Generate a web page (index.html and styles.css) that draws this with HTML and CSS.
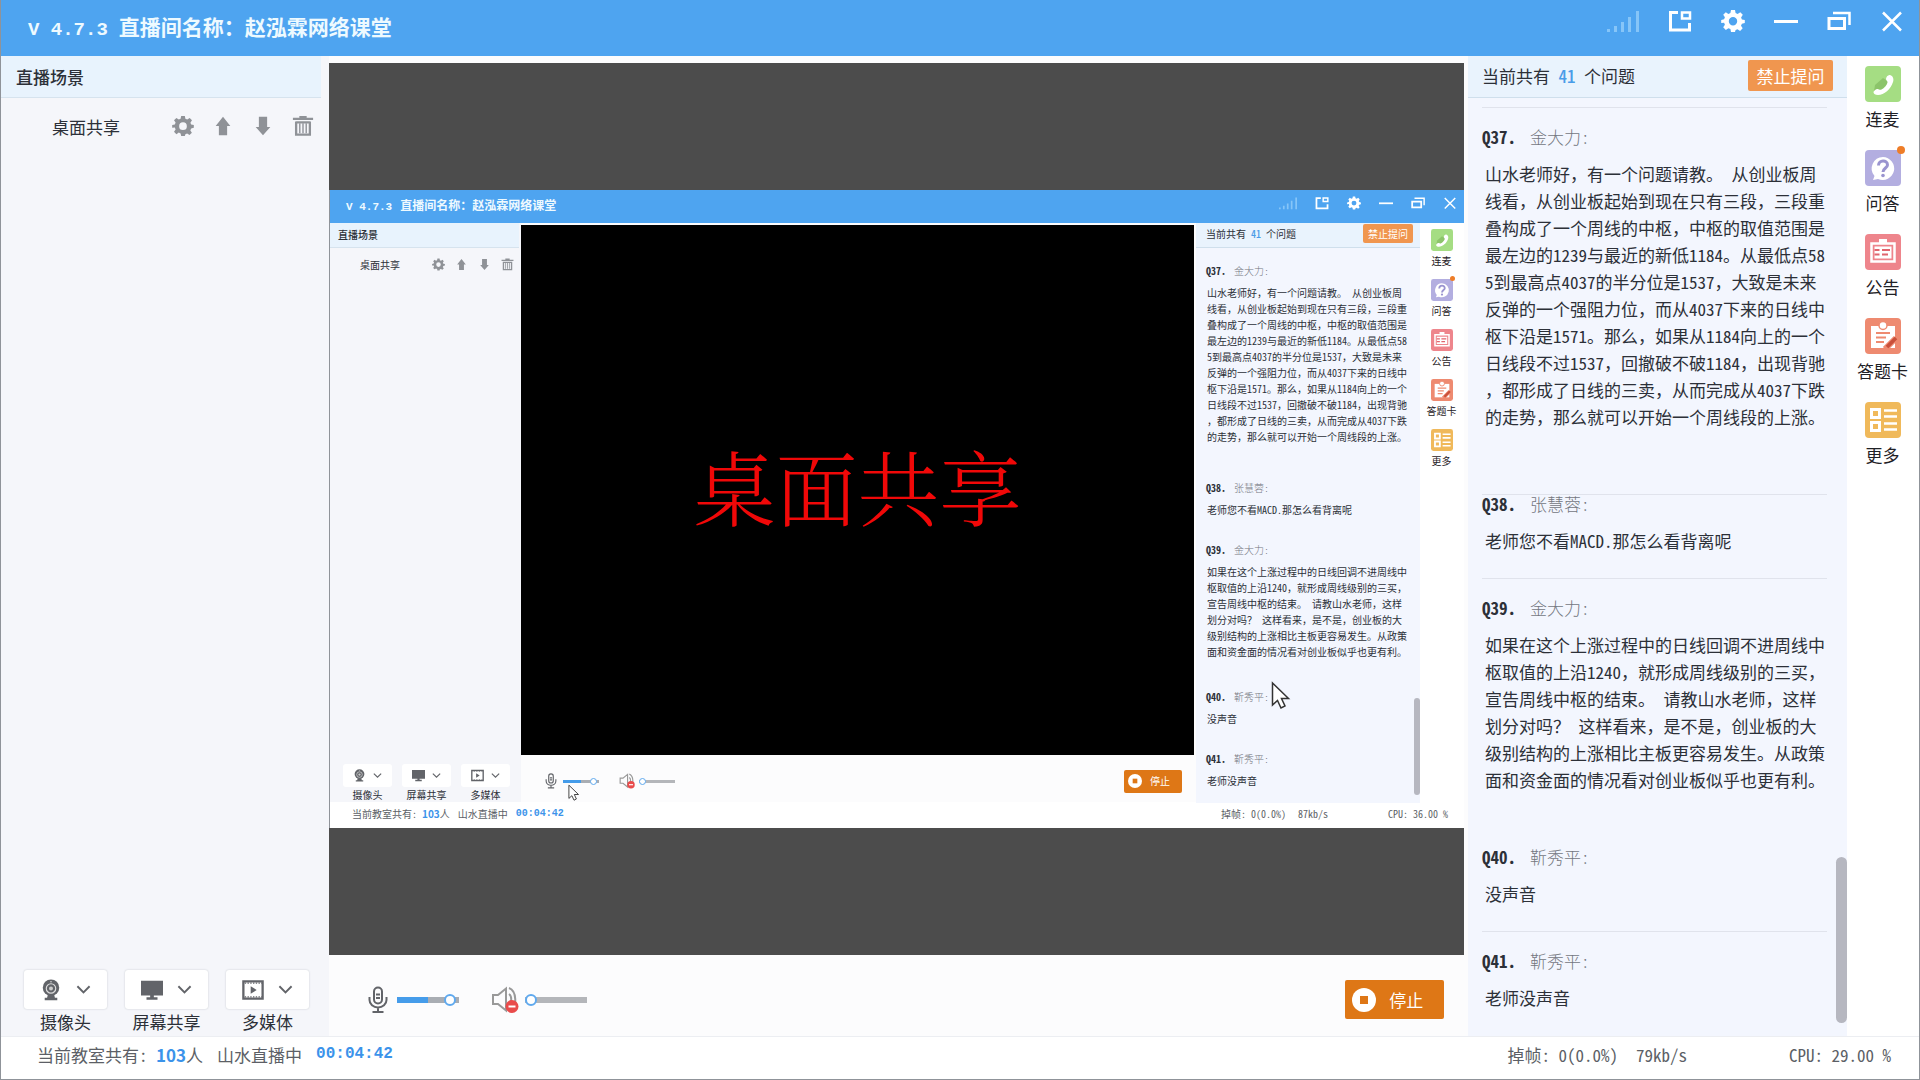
FILE: index.html
```html
<!DOCTYPE html>
<html lang="zh-CN">
<head>
<meta charset="utf-8">
<title>赵泓霖网络课堂</title>
<link rel="stylesheet" href="styles.css">
</head>
<body>
<svg class="sprite" aria-hidden="true">
  <symbol id="i-signal" viewBox="0 0 32 24"><path fill="currentColor" d="M0 20h3v3H0zM7 17h3v6H7zM14 13h3v10h-3zM21 8h3v15h-3zM29 2h3v21h-3z"/></symbol>
  <symbol id="i-popout" viewBox="0 0 24 24"><path fill="none" stroke="currentColor" stroke-width="3" d="M10 3.500H2.500v17.500h19V14"/><path fill="none" stroke="currentColor" stroke-width="2.500" d="M14 3.500h8v6h-8z"/></symbol>
  <symbol id="i-gear" viewBox="0 0 24 24"><path fill="currentColor" fill-rule="evenodd" d="M10 1h4l.6 3 2 .9L19.300 3.200l2.500 2.600-1.700 2.600.8 2 2.900.6v3l-2.900.8-.9 2 1.700 2.500-2.600 2.600-2.600-1.700-1.900.8L14 23h-4l-.6-2.900-2-.9-2.600 1.700-2.600-2.600 1.700-2.600-.8-2L.200 14v-3l2.900-.7.8-2L2.200 5.800l2.600-2.600 2.600 1.700 2-.9zM12 8a4.200 4.200 0 1 0 0 8.400A4.200 4.200 0 0 0 12 8z"/></symbol>
  <symbol id="i-min" viewBox="0 0 24 24"><path fill="currentColor" d="M0 11h24v3H0z"/></symbol>
  <symbol id="i-restore" viewBox="0 0 24 24"><path fill="none" stroke="currentColor" stroke-width="3" d="M2 9.500h15.500v10H2z"/><path fill="none" stroke="currentColor" stroke-width="2.500" d="M6 4h16.500v12"/></symbol>
  <symbol id="i-close" viewBox="0 0 24 24"><path stroke="currentColor" stroke-width="2.500" d="M3 3.500l18 18M21 3.500l-18 18"/></symbol>
  <symbol id="i-up" viewBox="0 0 24 24"><path fill="currentColor" d="M12 2l8 10h-3.500v10h-9V12H4z"/></symbol>
  <symbol id="i-down" viewBox="0 0 24 24"><path fill="currentColor" d="M12 22l8-9h-3.500V2h-9v11H4z"/></symbol>
  <symbol id="i-trash" viewBox="0 0 24 24"><path fill="currentColor" d="M8 1h8v2h7v2.500H1V3h7z"/><path fill="none" stroke="currentColor" stroke-width="2.500" d="M4.500 7v14.500h15V7M4.500 8h15"/><path stroke="currentColor" stroke-width="1.500" d="M8.500 9v11M12 9v11M15.500 9v11"/></symbol>
  <symbol id="i-webcam" viewBox="0 0 24 28"><circle cx="12" cy="11" r="10.500" fill="currentColor"/><circle cx="12" cy="12" r="6" fill="none" stroke="#ddd" stroke-width="1.500"/><circle cx="12" cy="12" r="2.500" fill="#ccc"/><circle cx="12" cy="3.500" r="1" fill="#ddd"/><path fill="currentColor" d="M8 20h8l1 4h3v3H4v-3h3z"/></symbol>
  <symbol id="i-monitor" viewBox="0 0 24 24"><path fill="currentColor" d="M0 2h24v16H0zM10 18h4v2h4v2.500H6V20h4z"/></symbol>
  <symbol id="i-media" viewBox="0 0 24 24"><path fill="none" stroke="currentColor" stroke-width="2.500" d="M1.500 2.500h21v19h-21z"/><path stroke="currentColor" stroke-width="1.500" stroke-dasharray="1.500 1.500" d="M3 4.500h19M3 19.500h19"/><path fill="currentColor" d="M9.500 8l6.500 4-6.500 4z"/></symbol>
  <symbol id="i-chevron" viewBox="0 0 16 16"><path fill="none" stroke="currentColor" stroke-width="2" d="M1.500 4.500L8 11l6.500-6.500"/></symbol>
  <symbol id="i-mic" viewBox="0 0 20 28"><rect x="6" y="1.500" width="8" height="16" rx="4" fill="none" stroke="currentColor" stroke-width="2"/><path fill="none" stroke="currentColor" stroke-width="2" d="M1.500 11v3a8.500 7.500 0 0 0 17 0v-3M10 21.500V26M4.500 26h11M8 8.500h4M8 12h4"/></symbol>
  <symbol id="i-muted" viewBox="0 0 28 28"><path fill="none" stroke="#999" stroke-width="2" d="M2 9h5l8-6.500v22L7 18H2zM18 2c8 3 8 19 2 23M18 8c3 2 3 8 0 11"/><circle cx="21" cy="20.500" r="6.500" fill="#e94b4b"/><path fill="#fff" d="M17.500 19.500h7v2h-7z"/></symbol>
  <symbol id="i-stop" viewBox="0 0 24 24"><circle cx="12" cy="12" r="12" fill="#fff"/><path fill="#de7716" d="M8 8h8v8H8z"/></symbol>
  <symbol id="i-phone" viewBox="0 0 36 36"><rect width="36" height="36" rx="4" fill="#a5dd83"/><path fill="#8cc46a" d="M10 19l8-7 6 4-10 11-5-2z"/><path fill="#fff" d="M25 9c3 1 4 4 3 7-2 7-9 13-15 13-3 0-4-1-4.500-2.500-.300-1.500 2-3 3.500-3.500 2-.5 2.500 1.500 4.500.5 3-1.500 5.500-4.500 6-7 .3-1.500-1.500-2-1.500-3.500 0-2 2-4.500 4-4z"/></symbol>
  <symbol id="i-qa" viewBox="0 0 36 36"><rect width="36" height="36" rx="4" fill="#b3aee0"/><path fill="#fff" d="M18 7a11.500 11.500 0 1 1-5 22l-5 1 1.500-4A11.500 11.500 0 0 1 18 7z"/><path fill="none" stroke="#9a94d0" stroke-width="3" d="M13.500 15.500c0-6 9-6 9-.5 0 3-4.500 3-4.500 7"/><circle cx="18" cy="25.500" r="1.800" fill="#9a94d0"/></symbol>
  <symbol id="i-notice" viewBox="0 0 36 36"><rect width="36" height="36" rx="4" fill="#ee858c"/><path fill="none" stroke="#fff" stroke-width="2.500" d="M6.500 9.500h23v18h-23z"/><path fill="#fff" d="M14 5h8v4h-8zM9.500 12.500h17v12h-17z"/><path stroke="#e0656e" stroke-width="2" d="M9.500 16h5M17 16h8M9.500 20.500h5M17 20.500h6"/></symbol>
  <symbol id="i-card" viewBox="0 0 36 36"><rect width="36" height="36" rx="4" fill="#ee8a70"/><path fill="#fff" d="M6 8h24v22H6z"/><circle cx="18" cy="7.500" r="4" fill="#fff" stroke="#ee8a70" stroke-width="1.500"/><path stroke="#ee8a70" stroke-width="2" d="M11 15h14M11 19.500h10M11 24h8"/><path stroke="#ee8a70" stroke-width="6" d="M20 31l11-11"/><path stroke="#c9503b" stroke-width="3.500" d="M22 29l9-9"/></symbol>
  <symbol id="i-more" viewBox="0 0 36 36"><rect width="36" height="36" rx="4" fill="#f0b95a"/><path fill="none" stroke="#fff" stroke-width="3" d="M6.500 7.500h8v8h-8zM6.500 20.500h8v8h-8z"/><path stroke="#fff" stroke-width="2.500" d="M19 8.500h13M19 14.500h13M19 21.500h13M19 27.500h13"/></symbol>
  <symbol id="i-cursor" viewBox="0 0 20 30"><path fill="#fff" stroke="#333" stroke-width="1.500" d="M1.500 2v22l5-4.500 3.500 7.500 4-2-3.500-7.500h7z"/></symbol>
</svg>

<div class="window">
  <header class="titlebar">
    <h1 class="title"><span class="version">V 4.7.3</span>直播间名称：赵泓霖网络课堂</h1>
    <div class="controls">
      <svg class="signal"><use href="#i-signal"/></svg>
      <button class="ctl" aria-label="小窗"><svg><use href="#i-popout"/></svg></button>
      <button class="ctl" aria-label="设置"><svg><use href="#i-gear"/></svg></button>
      <button class="ctl" aria-label="最小化"><svg><use href="#i-min"/></svg></button>
      <button class="ctl" aria-label="还原"><svg><use href="#i-restore"/></svg></button>
      <button class="ctl" aria-label="关闭"><svg><use href="#i-close"/></svg></button>
    </div>
  </header>

  <div class="body">
    <aside class="scenes">
      <h2 class="scenes-head">直播场景</h2>
      <div class="scene">
        <span class="scene-name">桌面共享</span>
        <button class="tool" aria-label="设置"><svg><use href="#i-gear"/></svg></button>
        <button class="tool" aria-label="上移"><svg><use href="#i-up"/></svg></button>
        <button class="tool" aria-label="下移"><svg><use href="#i-down"/></svg></button>
        <button class="tool" aria-label="删除"><svg><use href="#i-trash"/></svg></button>
      </div>
      <div class="sources">
        <div class="source"><button class="source-btn" aria-label="摄像头"><svg class="source-icon"><use href="#i-webcam"/></svg><svg class="chevron"><use href="#i-chevron"/></svg></button><span>摄像头</span></div>
        <div class="source"><button class="source-btn" aria-label="屏幕共享"><svg class="source-icon"><use href="#i-monitor"/></svg><svg class="chevron"><use href="#i-chevron"/></svg></button><span>屏幕共享</span></div>
        <div class="source"><button class="source-btn" aria-label="多媒体"><svg class="source-icon"><use href="#i-media"/></svg><svg class="chevron"><use href="#i-chevron"/></svg></button><span>多媒体</span></div>
      </div>
    </aside>

    <main class="main">
      <div class="stage">
        <div class="window preview">
          <div class="titlebar">
            <div class="title"><span class="version">V 4.7.3</span>直播间名称：赵泓霖网络课堂</div>
            <div class="controls">
              <svg class="signal"><use href="#i-signal"/></svg>
              <button class="ctl" aria-label="小窗"><svg><use href="#i-popout"/></svg></button>
              <button class="ctl" aria-label="设置"><svg><use href="#i-gear"/></svg></button>
              <button class="ctl" aria-label="最小化"><svg><use href="#i-min"/></svg></button>
              <button class="ctl" aria-label="还原"><svg><use href="#i-restore"/></svg></button>
              <button class="ctl" aria-label="关闭"><svg><use href="#i-close"/></svg></button>
            </div>
          </div>
          <div class="body">
            <div class="scenes">
              <h2 class="scenes-head">直播场景</h2>
              <div class="scene">
                <span class="scene-name">桌面共享</span>
                <button class="tool" aria-label="设置"><svg><use href="#i-gear"/></svg></button>
                <button class="tool" aria-label="上移"><svg><use href="#i-up"/></svg></button>
                <button class="tool" aria-label="下移"><svg><use href="#i-down"/></svg></button>
                <button class="tool" aria-label="删除"><svg><use href="#i-trash"/></svg></button>
              </div>
              <div class="sources">
                <div class="source"><button class="source-btn" aria-label="摄像头"><svg class="source-icon"><use href="#i-webcam"/></svg><svg class="chevron"><use href="#i-chevron"/></svg></button><span>摄像头</span></div>
                <div class="source"><button class="source-btn" aria-label="屏幕共享"><svg class="source-icon"><use href="#i-monitor"/></svg><svg class="chevron"><use href="#i-chevron"/></svg></button><span>屏幕共享</span></div>
                <div class="source"><button class="source-btn" aria-label="多媒体"><svg class="source-icon"><use href="#i-media"/></svg><svg class="chevron"><use href="#i-chevron"/></svg></button><span>多媒体</span></div>
              </div>
            </div>
            <div class="main">
              <div class="stage stage-share">桌面共享</div>
              <div class="mixer">
                <svg class="mic"><use href="#i-mic"/></svg>
                <input class="slider slider-mic" type="range" aria-label="麦克风音量" value="94">
                <svg class="speaker"><use href="#i-muted"/></svg>
                <input class="slider" type="range" aria-label="扬声器音量" value="0">
                <button class="stop"><svg><use href="#i-stop"/></svg>停止</button>
              </div>
            </div>
            <section class="questions">
              <div class="questions-head"><span>当前共有 <b class="count">41</b> 个问题</span><button class="forbid">禁止提问</button></div>
              <ul class="list">
                <li class="q q-gap"><div class="q-by"><b>Q37.</b>金大力:</div><p>山水老师好，有一个问题请教。<span class="n"> </span>从创业板周线看，从创业板起始到现在只有三段，三段重叠构成了一个周线的中枢，中枢的取值范围是最左边的<span class="n">1239</span>与最近的新低<span class="n">1184</span>。从最低点<span class="n">585</span>到最高点<span class="n">4037</span>的半分位是<span class="n">1537</span>，大致是未来反弹的一个强阻力位，而从<span class="n">4037</span>下来的日线中枢下沿是<span class="n">1571</span>。那么，如果从<span class="n">1184</span>向上的一个日线段不过<span class="n">1537</span>，回撤破不破<span class="n">1184</span>，出现背驰，都形成了日线的三卖，从而完成从<span class="n">4037</span>下跌的走势，那么就可以开始一个周线段的上涨。</p></li>
                <li class="q q-tight"><div class="q-by"><b>Q38.</b>张慧蓉:</div><p>老师您不看<span class="n">MACD.</span>那怎么看背离呢</p></li>
                <li class="q q-mid"><div class="q-by"><b>Q39.</b>金大力:</div><p>如果在这个上涨过程中的日线回调不进周线中枢取值的上沿<span class="n">1240</span>，就形成周线级别的三买，宣告周线中枢的结束。<span class="n"> </span>请教山水老师，这样划分对吗？<span class="n"> </span>这样看来，是不是，创业板的大级别结构的上涨相比主板更容易发生。从政策面和资金面的情况看对创业板似乎也更有利。</p></li>
                <li class="q q-plain"><div class="q-by"><b>Q40.</b>靳秀平:</div><p>没声音</p></li>
                <li class="q"><div class="q-by"><b>Q41.</b>靳秀平:</div><p>老师没声音</p></li>
              </ul>
              <span class="thumb"></span>
            </section>
            <div class="rail">
              <button class="rail-item"><svg><use href="#i-phone"/></svg>连麦</button>
              <button class="rail-item has-dot"><svg><use href="#i-qa"/></svg>问答</button>
              <button class="rail-item"><svg><use href="#i-notice"/></svg>公告</button>
              <button class="rail-item"><svg><use href="#i-card"/></svg>答题卡</button>
              <button class="rail-item"><svg><use href="#i-more"/></svg>更多</button>
            </div>
          </div>
          <div class="status">
            <span class="room">当前教室共有: <b>103</b>人</span><span>山水直播中</span><time class="clock">00:04:42</time>
            <span class="net">掉帧: 0(0.0%)</span><span class="rate">87kb/s</span><span class="cpu">CPU: 36.00 %</span>
          </div>
          <svg class="cursor cursor-large"><use href="#i-cursor"/></svg>
          <svg class="cursor cursor-small"><use href="#i-cursor"/></svg>
        </div>
      </div>
      <div class="mixer">
        <svg class="mic"><use href="#i-mic"/></svg>
        <input class="slider slider-mic" type="range" aria-label="麦克风音量" value="94">
        <svg class="speaker"><use href="#i-muted"/></svg>
        <input class="slider" type="range" aria-label="扬声器音量" value="0">
        <button class="stop"><svg><use href="#i-stop"/></svg>停止</button>
      </div>
    </main>

    <section class="questions">
      <div class="questions-head"><span>当前共有 <b class="count">41</b> 个问题</span><button class="forbid">禁止提问</button></div>
      <ul class="list">
        <li class="q q-gap"><div class="q-by"><b>Q37.</b>金大力:</div><p>山水老师好，有一个问题请教。<span class="n"> </span>从创业板周线看，从创业板起始到现在只有三段，三段重叠构成了一个周线的中枢，中枢的取值范围是最左边的<span class="n">1239</span>与最近的新低<span class="n">1184</span>。从最低点<span class="n">585</span>到最高点<span class="n">4037</span>的半分位是<span class="n">1537</span>，大致是未来反弹的一个强阻力位，而从<span class="n">4037</span>下来的日线中枢下沿是<span class="n">1571</span>。那么，如果从<span class="n">1184</span>向上的一个日线段不过<span class="n">1537</span>，回撤破不破<span class="n">1184</span>，出现背驰，都形成了日线的三卖，从而完成从<span class="n">4037</span>下跌的走势，那么就可以开始一个周线段的上涨。</p></li>
        <li class="q q-tight"><div class="q-by"><b>Q38.</b>张慧蓉:</div><p>老师您不看<span class="n">MACD.</span>那怎么看背离呢</p></li>
        <li class="q q-mid"><div class="q-by"><b>Q39.</b>金大力:</div><p>如果在这个上涨过程中的日线回调不进周线中枢取值的上沿<span class="n">1240</span>，就形成周线级别的三买，宣告周线中枢的结束。<span class="n"> </span>请教山水老师，这样划分对吗？<span class="n"> </span>这样看来，是不是，创业板的大级别结构的上涨相比主板更容易发生。从政策面和资金面的情况看对创业板似乎也更有利。</p></li>
        <li class="q q-plain"><div class="q-by"><b>Q40.</b>靳秀平:</div><p>没声音</p></li>
        <li class="q"><div class="q-by"><b>Q41.</b>靳秀平:</div><p>老师没声音</p></li>
      </ul>
      <span class="thumb"></span>
    </section>

    <nav class="rail">
      <button class="rail-item"><svg><use href="#i-phone"/></svg>连麦</button>
      <button class="rail-item has-dot"><svg><use href="#i-qa"/></svg>问答</button>
      <button class="rail-item"><svg><use href="#i-notice"/></svg>公告</button>
      <button class="rail-item"><svg><use href="#i-card"/></svg>答题卡</button>
      <button class="rail-item"><svg><use href="#i-more"/></svg>更多</button>
    </nav>
  </div>

  <footer class="status">
    <span class="room">当前教室共有: <b>103</b>人</span><span>山水直播中</span><time class="clock">00:04:42</time>
    <span class="net">掉帧: 0(0.0%)</span><span class="rate">79kb/s</span><span class="cpu">CPU: 29.00 %</span>
  </footer>
</div>
</body>
</html>
```
FILE: styles.css
```css
* { box-sizing: border-box; }

body { margin: 0; }

h1, h2, p, ul { margin: 0; padding: 0; font: inherit; }
ul { list-style: none; }
svg { display: block; flex: none; }
button { margin: 0; padding: 0; border: 0; background: none; color: inherit; font: inherit; font-feature-settings: inherit; cursor: pointer; }
.sprite { position: absolute; width: 0; height: 0; }

/* Sizes of the full window; .preview redefines them for the shared screen. */
.window {
  --text: 17px;
  --title: 21px;
  --version: 19px;
  --version-gap: 11px;
  --bar: 56px;
  --bar-pad: 27px;
  --icon: 24px;
  --signal: 32px;
  --ctl-gap: 29px;
  --ctl-right: 15px;
  --ctl-lift: 14px;
  --side: 328px;
  --side-trim: 8px;
  --head: 42px;
  --head-pad: 15px;
  --scene: 56px;
  --scene-pad: 51px;
  --tool: 22px;
  --tool-gap: 18px;
  --tool-right: 7px;
  --src-w: 83px;
  --src-h: 39px;
  --src-gap: 18px;
  --src-pad: 23px;
  --src-bottom: 2px;
  --src-inner: 16px;
  --chev: 15px;
  --label: 25px;
  --main-top: 7px;
  --main-right: 4px;
  --mixer: 81px;
  --mixer-pad: 39px;
  --mixer-drop: 8px;
  --mic: 28px;
  --mic-w: 20px;
  --mic-gap: 9px;
  --speaker-right: 6px;
  --slider: 62px;
  --track: 6px;
  --knob: 12px;
  --speaker-gap: 32px;
  --stop-w: 99px;
  --stop-h: 39px;
  --stop-right: 20px;
  --stop-pad: 14px;
  --panel: 379px;
  --forbid-w: 85px;
  --forbid-h: 31px;
  --forbid-right: 14px;
  --list-top: 9px;
  --q-left: 14px;
  --q-right: 20px;
  --q-indent: 3px;
  --q-top: 20px;
  --q-by: 17px;
  --q-mid: 15px;
  --q-line: 27px;
  --q-bottom: 24px;
  --q-gap: 64px;
  --q-long: 34px;
  --q-name: 14px;
  --thumb-w: 11px;
  --thumb-h: 166px;
  --thumb-bottom: 13px;
  --rail: 72px;
  --rail-pad: 10px;
  --rail-icon: 36px;
  --rail-item: 84px;
  --rail-label: 34px;
  --dot: 8px;
  --status: 43px;
  --status-pad: 36px;
  --status-gap: 14px;
  --status-lift: 8px;
  --clock: 16px;
  --rate-gap: 18px;
  --cpu-gap: 102px;
  --cpu-right: 28px;
  display: grid;
  grid-template-rows: auto 1fr auto;
  min-height: 100vh;
  overflow: hidden;
  border: 1px solid #8f9399;
  border-top: 0;
  background: #fcfcfd;
  color: #2c3038;
  font: 400 var(--text)/1 "Noto Sans CJK SC", sans-serif;
  font-feature-settings: "hwid" 1;
}

.preview {
  --text: 10px;
  --title: 12px;
  --version: 11px;
  --version-gap: 8px;
  --bar: 33px;
  --bar-pad: 16px;
  --icon: 14px;
  --signal: 18px;
  --ctl-gap: 18px;
  --ctl-right: 7px;
  --ctl-lift: 7px;
  --side: 191px;
  --side-trim: 2px;
  --head: 25px;
  --head-pad: 8px;
  --scene: 34px;
  --scene-pad: 30px;
  --tool: 13px;
  --tool-gap: 10px;
  --tool-right: 5px;
  --src-w: 49px;
  --src-h: 23px;
  --src-gap: 10px;
  --src-pad: 13px;
  --src-bottom: 0px;
  --src-inner: 10px;
  --chev: 9px;
  --label: 16px;
  --main-top: 2px;
  --main-right: 2px;
  --mixer: 48px;
  --mixer-pad: 24px;
  --mixer-drop: 5px;
  --mic: 16px;
  --mic-w: 12px;
  --mic-gap: 6px;
  --speaker-right: 4px;
  --slider: 36px;
  --track: 3px;
  --knob: 7px;
  --speaker-gap: 20px;
  --stop-w: 58px;
  --stop-h: 23px;
  --stop-right: 12px;
  --stop-pad: 8px;
  --panel: 224px;
  --forbid-w: 50px;
  --forbid-h: 19px;
  --forbid-right: 7px;
  --list-top: 5px;
  --q-left: 10px;
  --q-right: 10px;
  --q-indent: 1px;
  --q-top: 11px;
  --q-by: 12px;
  --q-mid: 8px;
  --q-line: 16px;
  --q-bottom: 14px;
  --q-gap: 36px;
  --q-long: 19px;
  --q-name: 8px;
  --thumb-w: 6px;
  --thumb-h: 97px;
  --thumb-bottom: 8px;
  --rail: 44px;
  --rail-pad: 6px;
  --rail-icon: 22px;
  --rail-item: 50px;
  --rail-label: 20px;
  --dot: 5px;
  --status: 26px;
  --status-pad: 22px;
  --status-gap: 8px;
  --status-lift: 2px;
  --clock: 10px;
  --rate-gap: 12px;
  --cpu-gap: 60px;
  --cpu-right: 16px;
  position: relative;
  min-height: 0;
  aspect-ratio: 16 / 9;
  border-width: 0 0 0 1px;
}

.titlebar {
  display: flex;
  align-items: center;
  justify-content: space-between;
  height: var(--bar);
  padding: 0 var(--ctl-right) 0 var(--bar-pad);
  background: #4ea4f0;
  color: #fff;
}
.title { font-size: var(--title); font-weight: 700; color: #eefaff; }
.version { margin-right: var(--version-gap); font-family: "Liberation Mono", monospace; font-size: var(--version); }
.controls { display: flex; align-items: center; gap: var(--ctl-gap); padding-bottom: var(--ctl-lift); }
.signal { width: var(--signal); height: var(--icon); color: #86c5f8; }
.ctl svg { width: var(--icon); height: var(--icon); }

.body { display: grid; grid-template-columns: var(--side) minmax(0, 1fr) var(--panel) var(--rail); min-height: 0; }

.scenes { display: flex; flex-direction: column; background: #f5f6fa; }
.scenes-head {
  display: flex;
  align-items: center;
  height: var(--head);
  margin-right: var(--side-trim);
  padding-left: var(--head-pad);
  border-bottom: 1px solid #d6e3ee;
  background: #e8f3fd;
  font-weight: 500;
}
.scene { display: flex; align-items: center; gap: var(--tool-gap); height: var(--scene); padding: 0 calc(var(--tool-right) + var(--side-trim)) 0 var(--scene-pad); }
.scene-name { flex: 1; }
.tool { color: #8f9297; }
.tool svg { width: var(--tool); height: var(--tool); }
.sources { display: flex; gap: var(--src-gap); margin-top: auto; padding: 0 0 var(--src-bottom) var(--src-pad); }
.source { display: flex; flex-direction: column; align-items: center; width: var(--src-w); line-height: var(--label); white-space: nowrap; }
.source-btn {
  display: flex;
  align-items: center;
  justify-content: space-between;
  width: 100%;
  height: var(--src-h);
  padding: 0 var(--src-inner);
  border-radius: 3px;
  background: #fff;
  box-shadow: 0 0 2px #c4c6cc;
  color: #626469;
}
.preview .source-btn { box-shadow: none; }
.source-icon { width: var(--tool); height: var(--tool); }
.chevron { width: var(--chev); height: var(--chev); }

.main { display: flex; flex-direction: column; padding: var(--main-top) var(--main-right) 0 0; }
.stage { display: flex; flex: 1; flex-direction: column; justify-content: center; min-height: 0; background: #4c4c4c; }
.stage-share {
  align-items: center;
  padding-bottom: 10px;
  background: #000;
  color: #f00808;
  font: 300 82px/1 "Noto Serif CJK SC", "Noto Sans CJK SC", serif;
}
.mixer { display: flex; align-items: center; height: var(--mixer); padding: var(--mixer-drop) var(--stop-right) 0 var(--mixer-pad); }
.mic { width: var(--mic-w); height: var(--mic); margin-right: var(--mic-gap); color: #626469; }
.speaker { width: var(--mic); height: var(--mic); margin: 0 var(--speaker-right) 0 var(--speaker-gap); }
.slider {
  width: var(--slider);
  height: var(--knob);
  margin: 0;
  appearance: none;
  background: linear-gradient(#b4b6ba, #b4b6ba) center / 100% var(--track) no-repeat;
}
.slider-mic { background-image: linear-gradient(90deg, #459cea 50%, #a9adb3 50%); }
.slider::-webkit-slider-thumb {
  width: var(--knob);
  height: var(--knob);
  appearance: none;
  border: 2px solid #5fa9ee;
  border-radius: 50%;
  background: #fff;
}
.preview .slider::-webkit-slider-thumb { border-width: 1px; }
.stop {
  display: flex;
  align-items: center;
  justify-content: space-around;
  width: var(--stop-w);
  height: var(--stop-h);
  margin-left: auto;
  padding-right: var(--stop-pad);
  border-radius: 2px;
  background: #de7716;
  color: #fff;
}
.stop svg { width: var(--icon); height: var(--icon); }

.questions { position: relative; background: #f3f6fe; }
.questions-head {
  display: flex;
  align-items: center;
  justify-content: space-between;
  height: var(--head);
  padding: 0 var(--forbid-right) 2px var(--q-left);
  border-bottom: 1px solid #cfdfec;
  background: #e9f3fd;
}
.count { color: #4a9ce8; font-weight: 500; }
.forbid { width: var(--forbid-w); height: var(--forbid-h); border-radius: 2px; background: #f0964f; color: #fff; }
.list { padding-top: var(--list-top); }
.q { margin: 0 var(--q-right) 0 var(--q-left); padding: var(--q-top) 0 var(--q-bottom); border-top: 1px solid #e0e3ec; }
.q-tight { padding-top: 0; }
.q-gap { padding-bottom: var(--q-gap); }
.q-mid { padding-bottom: var(--q-long); }
.q-plain, .preview .q { border-color: transparent; }
.q-by { margin-bottom: var(--q-mid); color: #74777f; font-weight: 300; line-height: var(--q-by); }
.q-by b { margin-right: var(--q-name); color: #2c3038; font-weight: 700; }
.q p { padding-left: var(--q-indent); line-height: var(--q-line); line-break: anywhere; text-spacing-trim: space-all; font-feature-settings: normal; }
.n { font-feature-settings: "hwid" 1; }
.thumb {
  position: absolute;
  right: 0;
  bottom: var(--thumb-bottom);
  width: var(--thumb-w);
  height: var(--thumb-h);
  border-radius: 6px;
  background: #b6b7c0;
}

.rail { display: flex; flex-direction: column; align-items: center; padding: var(--rail-pad) 1px 0 0; background: #fff; color: #1f2126; }
.rail-item { position: relative; height: var(--rail-item); line-height: var(--rail-label); white-space: nowrap; display: flex; flex-direction: column; align-items: center; }
.rail-item svg { width: var(--rail-icon); height: var(--rail-icon); }
.has-dot::after {
  content: "";
  position: absolute;
  top: calc(var(--dot) / -2);
  right: calc(var(--dot) / -2);
  width: var(--dot);
  height: var(--dot);
  border-radius: 50%;
  background: #ee7d28;
}

.status {
  display: flex;
  align-items: center;
  height: var(--status);
  padding: 0 var(--cpu-right) var(--status-lift) var(--status-pad);
  border-top: 1px solid #eceef2;
  background: #fff;
  color: #5c5f66;
  white-space: nowrap;
}
.preview .status { border-top: 0; }
.room { margin-right: var(--status-gap); }
.room b { color: #3b93ea; font-feature-settings: normal; }
.clock { margin-left: var(--status-gap); color: #3b93ea; font: 700 var(--clock)/1 "Liberation Mono", monospace; }
.net { margin-left: auto; }
.rate { margin-left: var(--rate-gap); }
.cpu { margin-left: var(--cpu-gap); }

.cursor { position: absolute; }
.cursor-large { left: 83%; top: 77%; width: 20px; height: 30px; }
.cursor-small { left: 21%; top: 93%; width: 12px; height: 18px; }
```
